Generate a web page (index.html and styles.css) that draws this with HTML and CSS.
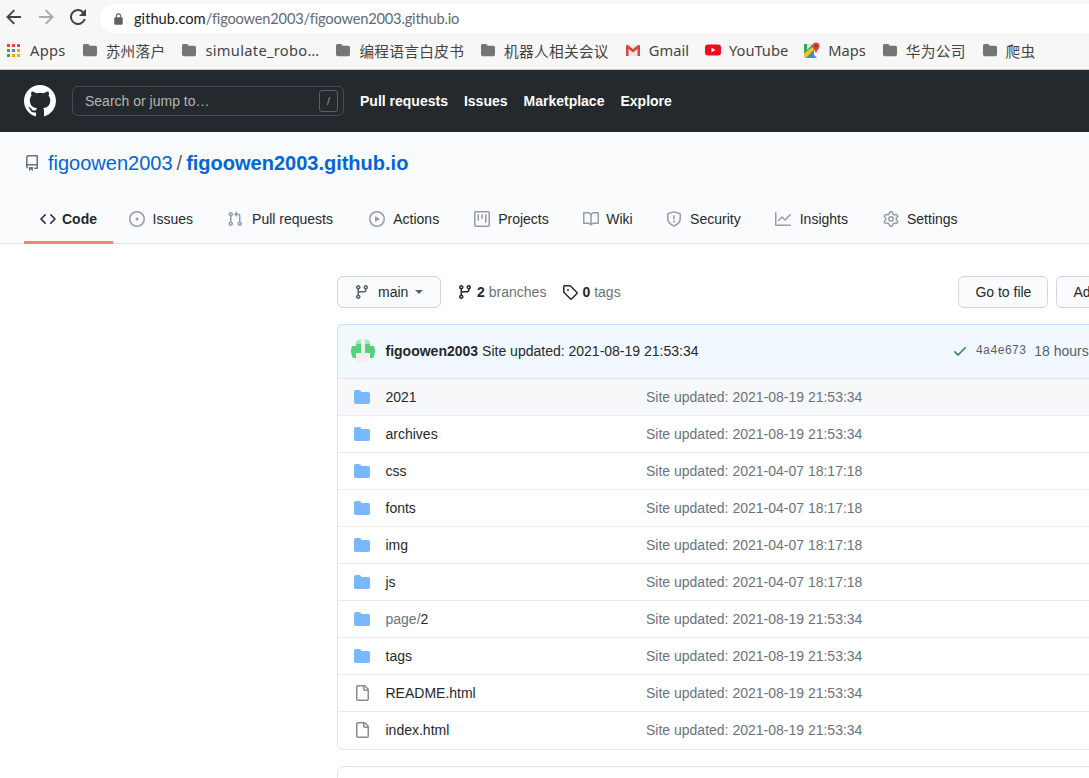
FILE: index.html
```html
<!DOCTYPE html>
<html>
<head>
  <title>figoowen2003/figoowen2003.github.io</title>
  <link rel="stylesheet" href="styles.css">
</head>
<body>
  <svg class="defs" width="0" height="0">
    <symbol id="i-repo" viewBox="0 0 16 16"><path d="M2 2.5A2.5 2.5 0 014.5 0h8.75a.75.75 0 01.75.75v12.5a.75.75 0 01-.75.75h-2.5a.75.75 0 110-1.5h1.75v-2h-8a1 1 0 00-.714 1.7.75.75 0 01-1.072 1.05A2.495 2.495 0 012 11.5v-9zm10.5-1V9h-8c-.356 0-.694.074-1 .208V2.5a1 1 0 011-1h8zM5 12.25v3.25a.25.25 0 00.4.2l1.45-1.087a.25.25 0 01.3 0L8.6 15.7a.25.25 0 00.4-.2v-3.25a.25.25 0 00-.25-.25h-3.5a.25.25 0 00-.25.25z"/></symbol>
    <symbol id="i-branch" viewBox="0 0 16 16"><path d="M11.75 2.5a.75.75 0 100 1.5.75.75 0 000-1.5zm-2.25.75a2.25 2.25 0 113 2.122V6A2.5 2.5 0 0110 8.5H6a1 1 0 00-1 1v1.128a2.251 2.251 0 11-1.5 0V5.372a2.25 2.25 0 111.5 0v1.836A2.492 2.492 0 016 7h4a1 1 0 001-1v-.628A2.25 2.25 0 019.5 3.25zM4.25 12a.75.75 0 100 1.5.75.75 0 000-1.5zM3.5 3.25a.75.75 0 111.5 0 .75.75 0 01-1.5 0z"/></symbol>
    <symbol id="i-dir" viewBox="0 0 16 16"><path d="M1.75 1A1.75 1.75 0 000 2.75v10.5C0 14.216.784 15 1.75 15h12.5A1.75 1.75 0 0016 13.25v-8.5A1.75 1.75 0 0014.25 3h-6.5a.25.25 0 01-.2-.1l-.9-1.2c-.33-.44-.85-.7-1.4-.7h-3.5z"/></symbol>
    <symbol id="i-file" viewBox="0 0 16 16"><path d="M3.75 1.5a.25.25 0 00-.25.25v12.5c0 .138.112.25.25.25h9.5a.25.25 0 00.25-.25V6h-2.75A1.75 1.75 0 019 4.25V1.5H3.75zm6.75.062V4.25c0 .138.112.25.25.25h2.688a.252.252 0 00-.011-.013l-2.914-2.914a.272.272 0 00-.013-.011zM2 1.75C2 .784 2.784 0 3.75 0h6.586c.464 0 .909.184 1.237.513l2.914 2.914c.329.328.513.773.513 1.237v9.586A1.75 1.75 0 0113.25 16h-9.5A1.75 1.75 0 012 14.25V1.75z"/></symbol>
  </svg>

  <div class="toolbar">
    <svg class="nav-btn" viewBox="0 0 16 16"><path d="M15 7H3.800l5.200-5.200L7.600.5 0.100 8l7.500 7.500 1.400-1.300L3.800 9H15z"/></svg>
    <svg class="nav-btn nav-off" viewBox="0 0 16 16"><path d="M1 7h11.200L7 1.800 8.400.5 15.900 8l-7.500 7.500-1.400-1.300L12.200 9H1z"/></svg>
    <svg class="nav-btn" viewBox="0 0 16 16"><path d="M13.650 2.350A8 8 0 1015.740 10h-2.080A6 6 0 118 2a5.900 5.900 0 014.220 1.780L9 7h7V0z"/></svg>
    <div class="omnibox">
      <svg class="lock" viewBox="0 0 10 13"><path d="M8.500 4.500H8V3.200a3 3 0 00-6 0v1.300h-.5A1.200 1.200 0 00.3 5.700v5.900a1.200 1.200 0 001.200 1.200h7a1.200 1.200 0 001.200-1.200V5.700a1.200 1.200 0 00-1.200-1.200zM3.200 3.200a1.800 1.800 0 013.600 0v1.300H3.200z"/></svg>
      <span class="url-host">github.com</span><span class="url-path">/figoowen2003/figoowen2003.github.io</span>
    </div>
  </div>

  <div class="bookmarks">
    <div class="bm bm-apps">
      <div class="apps-grid">
        <i class="c-r"></i><i class="c-r"></i><i class="c-r"></i>
        <i class="c-g"></i><i class="c-b"></i><i class="c-y"></i>
        <i class="c-g"></i><i class="c-y"></i><i class="c-y"></i>
      </div>
      <span>Apps</span>
    </div>
    <div class="bm"><svg class="bm-folder" viewBox="0 0 16 16"><use href="#i-dir"/></svg><span>苏州落户</span></div>
    <div class="bm"><svg class="bm-folder" viewBox="0 0 16 16"><use href="#i-dir"/></svg><span>simulate_robo…</span></div>
    <div class="bm"><svg class="bm-folder" viewBox="0 0 16 16"><use href="#i-dir"/></svg><span>编程语言白皮书</span></div>
    <div class="bm"><svg class="bm-folder" viewBox="0 0 16 16"><use href="#i-dir"/></svg><span>机器人相关会议</span></div>
    <div class="bm bm-site">
      <svg class="bm-icon" viewBox="0 0 16 16">
        <path fill="#e8e8e8" d="M1 3h14v11H1z"/>
        <path fill="#d9453a" d="M1 3.500v10.500h2.500V7l4.500 3.500L12.500 7v7H15V3.500l-1.500-.8L8 7 2.500 2.700z"/>
      </svg>
      <span>Gmail</span>
    </div>
    <div class="bm bm-site">
      <svg class="bm-icon" viewBox="0 0 16 16">
        <rect x="0" y="2.500" width="16" height="11" rx="3" fill="#f40b1f"/>
        <path fill="#fff" d="M6.500 5.700v4.600L10.500 8z"/>
      </svg>
      <span>YouTube</span>
    </div>
    <div class="bm bm-site">
      <svg class="bm-icon" viewBox="0 0 16 16">
        <path fill="#34a853" d="M0 2h10v14H0z"/>
        <path fill="#fbc02d" d="M0 11.500L8.500 5l2 2L2 16H0z"/>
        <path fill="#4285f4" d="M3 16l5-5 5 5z"/>
        <path fill="#dfe3e6" d="M3 2h6L3 8z"/>
        <circle cx="12" cy="4" r="3.500" fill="#db4437"/>
        <path fill="#db4437" d="M9.300 6l2.700 5 2.700-5z"/>
        <circle cx="12" cy="4" r="1.200" fill="#8e2a20"/>
      </svg>
      <span>Maps</span>
    </div>
    <div class="bm"><svg class="bm-folder" viewBox="0 0 16 16"><use href="#i-dir"/></svg><span>华为公司</span></div>
    <div class="bm"><svg class="bm-folder" viewBox="0 0 16 16"><use href="#i-dir"/></svg><span>爬虫</span></div>
  </div>

  <header class="site-header">
    <svg class="logo" viewBox="0 0 16 16"><path d="M8 0C3.580 0 0 3.580 0 8c0 3.540 2.290 6.530 5.470 7.590.4.070.55-.17.55-.38 0-.19-.01-.82-.01-1.490-2.010.37-2.530-.49-2.690-.94-.09-.23-.48-.94-.82-1.130-.28-.15-.68-.52-.01-.53.63-.01 1.080.58 1.230.82.72 1.210 1.870.87 2.330.66.070-.52.280-.87.510-1.070-1.780-.2-3.640-.89-3.640-3.950 0-.87.310-1.590.820-2.150-.08-.2-.36-1.020.08-2.120 0 0 .67-.21 2.200.82.640-.18 1.320-.27 2-.27.68 0 1.360.09 2 .27 1.530-1.040 2.200-.82 2.200-.82.44 1.100.16 1.920.08 2.120.51.56.82 1.270.82 2.150 0 3.070-1.870 3.750-3.650 3.950.29.25.54.73.54 1.480 0 1.070-.01 1.930-.01 2.200 0 .21.15.46.55.38A8.013 8.013 0 0016 8c0-4.420-3.580-8-8-8z"/></svg>
    <div class="search">
      <span>Search or jump to…</span>
      <kbd class="slash">/</kbd>
    </div>
    <nav class="top-nav">
      <a>Pull requests</a>
      <a>Issues</a>
      <a>Marketplace</a>
      <a>Explore</a>
    </nav>
  </header>

  <div class="repo-head">
    <h1 class="repo-title">
      <svg class="repo-icon" viewBox="0 0 16 16"><use href="#i-repo"/></svg>
      <a class="owner">figoowen2003</a>
      <span class="sep">/</span>
      <a class="repo-name">figoowen2003.github.io</a>
    </h1>
    <nav class="tabs">
      <a class="tab tab-on">
        <svg viewBox="0 0 16 16"><path d="M4.720 3.220a.75.75 0 011.060 1.060L2.060 8l3.720 3.720a.75.75 0 11-1.060 1.060L.47 8.530a.75.75 0 010-1.060l4.250-4.250zm6.560 0a.75.75 0 10-1.060 1.060L13.940 8l-3.720 3.720a.75.75 0 101.060 1.060l4.250-4.250a.75.75 0 000-1.060l-4.250-4.250z"/></svg>
        <span class="tab-label" data-bold="Code">Code</span>
      </a>
      <a class="tab">
        <svg viewBox="0 0 16 16"><path d="M8 9.500a1.500 1.500 0 100-3 1.500 1.500 0 000 3z"/><path d="M8 0a8 8 0 100 16A8 8 0 008 0zM1.500 8a6.500 6.500 0 1113 0 6.500 6.500 0 01-13 0z"/></svg>
        <span class="tab-label" data-bold="Issues">Issues</span>
      </a>
      <a class="tab">
        <svg viewBox="0 0 16 16"><path d="M7.177 3.073L9.573.677A.25.25 0 0110 .854v4.792a.25.25 0 01-.427.177L7.177 3.427a.25.25 0 010-.354zM3.750 2.500a.75.75 0 100 1.500.75.75 0 000-1.500zm-2.250.75a2.250 2.250 0 113 2.122v5.256a2.251 2.251 0 11-1.500 0V5.372A2.250 2.250 0 011.500 3.250zM11 2.500h-1V4h1a1 1 0 011 1v5.628a2.251 2.251 0 101.500 0V5A2.500 2.500 0 0011 2.500zm1 10.250a.75.75 0 111.500 0 .75.75 0 01-1.500 0zM3.750 12a.75.75 0 100 1.500.75.75 0 000-1.500z"/></svg>
        <span class="tab-label" data-bold="Pull requests">Pull requests</span>
      </a>
      <a class="tab">
        <svg viewBox="0 0 16 16"><path d="M1.500 8a6.500 6.500 0 1113 0 6.500 6.500 0 01-13 0zM8 0a8 8 0 100 16A8 8 0 008 0zM6.379 5.227A.25.25 0 006 5.442v5.117a.25.25 0 00.379.214l4.264-2.559a.25.25 0 000-.428L6.379 5.227z"/></svg>
        <span class="tab-label" data-bold="Actions">Actions</span>
      </a>
      <a class="tab">
        <svg viewBox="0 0 16 16"><path d="M1.750 0A1.750 1.750 0 000 1.750v12.500C0 15.216.784 16 1.750 16h12.500A1.750 1.750 0 0016 14.250V1.750A1.750 1.750 0 0014.250 0H1.750zM1.500 1.750a.25.25 0 01.25-.25h12.500a.25.25 0 01.25.25v12.500a.25.25 0 01-.25.25H1.750a.25.25 0 01-.25-.25V1.750zM11.750 3a.75.75 0 00-.75.75v7.500a.75.75 0 001.500 0v-7.500a.75.75 0 00-.75-.75zm-8.250.75a.75.75 0 011.500 0v5.500a.75.75 0 01-1.500 0v-5.500zM8 3a.75.75 0 00-.75.75v3.500a.75.75 0 001.500 0v-3.500A.75.75 0 008 3z"/></svg>
        <span class="tab-label" data-bold="Projects">Projects</span>
      </a>
      <a class="tab">
        <svg viewBox="0 0 16 16"><path d="M0 1.750A.75.75 0 01.75 1h4.253c1.227 0 2.317.59 3 1.501A3.744 3.744 0 0111.006 1h4.245a.75.75 0 01.75.75v10.500a.75.75 0 01-.75.75h-4.507a2.250 2.250 0 00-1.591.659l-.622.621a.75.75 0 01-1.060 0l-.622-.621A2.250 2.250 0 005.258 13H.75a.75.75 0 01-.75-.75V1.750zm8.755 3a2.250 2.250 0 012.250-2.250H14.500v9h-3.757c-.71 0-1.400.201-1.992.572l.004-7.322zm-1.504 7.324l.004-5.073-.002-2.253A2.250 2.250 0 005.003 2.500H1.500v9h3.757a3.750 3.750 0 011.994.574z"/></svg>
        <span class="tab-label" data-bold="Wiki">Wiki</span>
      </a>
      <a class="tab">
        <svg viewBox="0 0 16 16"><path d="M7.467.133a1.750 1.750 0 011.066 0l5.250 1.680A1.750 1.750 0 0115 3.480V7c0 1.566-.32 3.182-1.303 4.682-.983 1.498-2.585 2.813-5.032 3.855a1.700 1.700 0 01-1.330 0c-2.447-1.042-4.049-2.357-5.032-3.855C1.320 10.182 1 8.566 1 7V3.480a1.750 1.750 0 011.217-1.667l5.250-1.680zm.61 1.429a.25.25 0 00-.153 0l-5.250 1.680a.25.25 0 00-.174.238V7c0 1.358.275 2.666 1.057 3.860.784 1.194 2.121 2.340 4.366 3.297a.2.2 0 00.154 0c2.245-.956 3.582-2.104 4.366-3.298C13.225 9.666 13.500 8.360 13.500 7V3.480a.25.25 0 00-.174-.237l-5.250-1.680zM9 10.500a1 1 0 11-2 0 1 1 0 012 0zm-.25-5.750a.75.75 0 10-1.500 0v3a.75.75 0 001.500 0v-3z"/></svg>
        <span class="tab-label" data-bold="Security">Security</span>
      </a>
      <a class="tab">
        <svg viewBox="0 0 16 16"><path d="M1.500 1.750a.75.75 0 00-1.500 0v12.500c0 .414.336.75.75.75h14.500a.75.75 0 000-1.500H1.500V1.750zm14.280 2.530a.75.75 0 00-1.060-1.060L10 7.940 7.530 5.470a.75.75 0 00-1.060 0L3.220 8.720a.75.75 0 001.060 1.060L7 7.060l2.470 2.470a.75.75 0 001.060 0l5.250-5.250z"/></svg>
        <span class="tab-label" data-bold="Insights">Insights</span>
      </a>
      <a class="tab">
        <svg viewBox="0 0 16 16"><path d="M7.429 1.525a6.593 6.593 0 011.142 0c.036.003.108.036.137.146l.289 1.105c.147.56.55.967.997 1.189.174.086.341.183.501.29.417.278.97.423 1.530.27l1.102-.303c.11-.03.175.016.195.046.219.31.41.641.573.989.014.031.022.11-.059.19l-.815.806c-.411.406-.562.957-.53 1.456a4.588 4.588 0 010 .582c-.032.499.119 1.050.53 1.456l.815.806c.08.08.073.159.059.19a6.494 6.494 0 01-.573.99c-.02.029-.086.074-.195.045l-1.103-.303c-.559-.153-1.112-.008-1.529.27-.16.107-.327.204-.5.29-.449.222-.851.628-.998 1.189l-.289 1.105c-.029.11-.101.143-.137.146a6.613 6.613 0 01-1.142 0c-.036-.003-.108-.037-.137-.146l-.289-1.105c-.147-.56-.55-.967-.997-1.189a4.502 4.502 0 01-.501-.29c-.417-.278-.97-.423-1.530-.27l-1.102.303c-.11.03-.175-.016-.195-.046a6.492 6.492 0 01-.573-.989c-.014-.031-.022-.11.059-.19l.815-.806c.411-.406.562-.957.53-1.456a4.587 4.587 0 010-.582c.032-.499-.119-1.050-.53-1.456l-.815-.806c-.08-.08-.073-.159-.059-.19a6.440 6.440 0 01.573-.99c.02-.029.086-.075.195-.045l1.103.303c.559.153 1.112.008 1.529-.27.16-.107.327-.204.5-.29.449-.222.851-.628.998-1.189l.289-1.105c.029-.11.101-.143.137-.146zM8 0c-.236 0-.47.01-.701.03-.743.065-1.290.615-1.458 1.261l-.29 1.106c-.017.066-.078.158-.211.224a5.994 5.994 0 00-.668.386c-.123.082-.233.09-.3.071L3.270 2.776c-.644-.177-1.392.02-1.820.63a7.977 7.977 0 00-.704 1.217c-.315.675-.111 1.422.363 1.891l.815.806c.05.048.098.147.088.294a6.084 6.084 0 000 .772c.01.147-.038.246-.088.294l-.815.806c-.474.469-.678 1.216-.363 1.891.2.428.436.835.704 1.218.428.609 1.176.806 1.820.63l1.103-.303c.066-.019.176-.011.299.071.213.143.436.272.668.386.133.066.194.158.212.224l.289 1.106c.169.646.715 1.196 1.458 1.260a8.094 8.094 0 001.402 0c.743-.064 1.290-.614 1.458-1.260l.29-1.106c.017-.066.078-.158.211-.224a5.980 5.980 0 00.668-.386c.123-.082.233-.09.3-.071l1.102.302c.644.177 1.392-.02 1.820-.63.268-.382.505-.789.704-1.217.315-.675.111-1.422-.364-1.891l-.814-.806c-.05-.048-.098-.147-.088-.294a6.100 6.100 0 000-.772c-.01-.147.039-.246.088-.294l.814-.806c.475-.469.679-1.216.364-1.891a7.992 7.992 0 00-.704-1.218c-.428-.609-1.176-.806-1.820-.63l-1.103.303c-.066.019-.176.011-.299-.071a5.991 5.991 0 00-.668-.386c-.133-.066-.194-.158-.212-.224L10.160 1.290C9.990.645 9.444.095 8.701.031A8.094 8.094 0 008 0zm1.500 8a1.500 1.500 0 11-3 0 1.500 1.500 0 013 0zM11 8a3 3 0 11-6 0 3 3 0 016 0z"/></svg>
        <span class="tab-label" data-bold="Settings">Settings</span>
      </a>
    </nav>
  </div>

  <main class="repo-main">
    <div class="file-nav">
      <button class="btn btn-branch">
        <svg class="branch-icon" viewBox="0 0 16 16"><use href="#i-branch"/></svg>
        <span>main</span>
        <i class="caret"></i>
      </button>
      <a class="nav-count"><svg viewBox="0 0 16 16"><use href="#i-branch"/></svg><b>2</b><span>branches</span></a>
      <a class="nav-count"><svg viewBox="0 0 16 16"><path d="M2.500 7.775V2.750a.25.25 0 01.25-.25h5.025a.25.25 0 01.177.073l6.250 6.250a.25.25 0 010 .354l-5.025 5.025a.25.25 0 01-.354 0l-6.250-6.250a.25.25 0 01-.073-.177zm-1.500 0V2.750C1 1.784 1.784 1 2.750 1h5.025c.464 0 .91.184 1.238.513l6.250 6.250a1.750 1.750 0 010 2.474l-5.026 5.026a1.750 1.750 0 01-2.474 0l-6.250-6.250A1.750 1.750 0 011 7.775zM6 5a1 1 0 100 2 1 1 0 000-2z"/></svg><b>0</b><span>tags</span></a>
      <div class="file-actions">
        <button class="btn">Go to file</button>
        <button class="btn">Add file <i class="caret"></i></button>
      </div>
    </div>

    <div class="box">
      <div class="commit-head">
        <svg class="avatar" viewBox="0 0 5 5" shape-rendering="crispEdges">
          <rect width="5" height="5" fill="#f0f0f0"/>
          <path fill="#a9e6bb" d="M1 0h1v1H1zM3 0h1v1H3z"/>
          <path fill="#55d17b" d="M1 1h1v2H1zM3 1h1v2H3zM0 1.500h1v2.500H0zM4 1.500h1v2.500H4z"/>
        </svg>
        <b class="commit-author">figoowen2003</b>
        <span class="commit-msg">Site updated: 2021-08-19 21:53:34</span>
        <div class="commit-meta">
          <svg class="check" viewBox="0 0 16 16"><path d="M13.780 4.220a.75.75 0 010 1.060l-7.250 7.250a.75.75 0 01-1.060 0L2.220 9.280a.75.75 0 011.060-1.060L6 10.940l6.720-6.720a.75.75 0 011.060 0z"/></svg>
          <code class="sha">4a4e673</code>
          <span>18 hours ago</span>
        </div>
      </div>
      <div class="row row-hover">
        <svg class="dir" viewBox="0 0 16 16"><use href="#i-dir"/></svg><a class="name">2021</a><span class="msg">Site updated: 2021-08-19 21:53:34</span>
      </div>
      <div class="row">
        <svg class="dir" viewBox="0 0 16 16"><use href="#i-dir"/></svg><a class="name">archives</a><span class="msg">Site updated: 2021-08-19 21:53:34</span>
      </div>
      <div class="row">
        <svg class="dir" viewBox="0 0 16 16"><use href="#i-dir"/></svg><a class="name">css</a><span class="msg">Site updated: 2021-04-07 18:17:18</span>
      </div>
      <div class="row">
        <svg class="dir" viewBox="0 0 16 16"><use href="#i-dir"/></svg><a class="name">fonts</a><span class="msg">Site updated: 2021-04-07 18:17:18</span>
      </div>
      <div class="row">
        <svg class="dir" viewBox="0 0 16 16"><use href="#i-dir"/></svg><a class="name">img</a><span class="msg">Site updated: 2021-04-07 18:17:18</span>
      </div>
      <div class="row">
        <svg class="dir" viewBox="0 0 16 16"><use href="#i-dir"/></svg><a class="name">js</a><span class="msg">Site updated: 2021-04-07 18:17:18</span>
      </div>
      <div class="row">
        <svg class="dir" viewBox="0 0 16 16"><use href="#i-dir"/></svg><a class="name"><span class="name-dim">page/</span>2</a><span class="msg">Site updated: 2021-08-19 21:53:34</span>
      </div>
      <div class="row">
        <svg class="dir" viewBox="0 0 16 16"><use href="#i-dir"/></svg><a class="name">tags</a><span class="msg">Site updated: 2021-08-19 21:53:34</span>
      </div>
      <div class="row">
        <svg class="doc" viewBox="0 0 16 16"><use href="#i-file"/></svg><a class="name">README.html</a><span class="msg">Site updated: 2021-08-19 21:53:34</span>
      </div>
      <div class="row">
        <svg class="doc" viewBox="0 0 16 16"><use href="#i-file"/></svg><a class="name">index.html</a><span class="msg">Site updated: 2021-08-19 21:53:34</span>
      </div>
    </div>

    <div class="box box-next"></div>
  </main>
</body>
</html>
```

FILE: styles.css
```css
html, body {
  margin: 0;
  height: 778px;
  overflow: hidden;
}

body {
  font-family: "Liberation Sans", Arial, sans-serif;
  font-size: 14px;
  color: #24292e;
  background: #fff;
}

svg {
  fill-rule: evenodd;
}

.defs {
  display: block;
  height: 0;
}

/* browser chrome */
.toolbar {
  height: 33px;
  display: flex;
  align-items: center;
  padding-left: 6px;
  background: #f7f7f7;
  box-sizing: border-box;
  padding-top: 4px;
}

.nav-btn {
  width: 16px;
  height: 16px;
  margin-right: 16px;
  fill: #444;
  margin-top: -4px;
}

.nav-off {
  fill: #aaa;
}

.omnibox {
  flex: 1;
  height: 29px;
  margin-left: -2px;
  padding-left: 14px;
  display: flex;
  align-items: center;
  background: #fff;
  border-radius: 14px 0 0 14px;
  font-family: "Lato", sans-serif;
  font-size: 14.67px;
}

.lock {
  width: 9px;
  height: 12px;
  margin-right: 11px;
  fill: #5f6368;
}

.url-host {
  color: #1a1a1a;
}

.url-path {
  color: #5f6a75;
  letter-spacing: -0.2px;
}

.bookmarks {
  height: 37px;
  display: flex;
  align-items: center;
  gap: 16px;
  padding-left: 7px;
  padding-bottom: 2px;
  background: #f7f7f7;
  border-bottom: 1px solid #c9c9c9;
  box-sizing: border-box;
  font-family: "Noto Sans", "Noto Sans CJK SC", sans-serif;
  font-size: 14.67px;
  letter-spacing: 0.3px;
  color: #444;
  white-space: nowrap;
}

.bm {
  display: flex;
  align-items: center;
  gap: 8px;
}

.bm-apps {
  gap: 10px;
}

.bm-site {
  letter-spacing: 0;
}

.apps-grid {
  width: 13px;
  height: 13px;
  display: grid;
  grid-template-columns: repeat(3, 3px);
  grid-template-rows: repeat(3, 3px);
  gap: 2px;
}

.c-r { background: #e8453c; }
.c-g { background: #34a853; }
.c-b { background: #4285f4; }
.c-y { background: #f9ab00; }

.bm-folder {
  width: 14px;
  height: 14px;
  margin: 0 1px;
  fill: #757575;
}

.bm-icon {
  width: 16px;
  height: 16px;
}

/* github header */
.site-header {
  height: 62px;
  display: flex;
  align-items: center;
  padding: 0 24px;
  background: #24292e;
}

.logo {
  width: 32px;
  height: 32px;
  margin-right: 16px;
  fill: #fff;
}

.search {
  width: 272px;
  height: 30px;
  box-sizing: border-box;
  display: flex;
  align-items: center;
  justify-content: space-between;
  padding: 0 5px 0 12px;
  border: 1px solid #444d56;
  border-radius: 6px;
  color: #b3b5b7;
}

.slash {
  width: 17px;
  height: 20px;
  border: 1px solid #57606a;
  border-radius: 3px;
  font: 11px "Liberation Sans", sans-serif;
  color: #959da5;
  display: flex;
  align-items: center;
  justify-content: center;
}

.top-nav {
  display: flex;
  gap: 16px;
  margin-left: 16px;
  font-weight: bold;
  color: #fff;
}

/* repo head */
.repo-head {
  height: 112px;
  box-sizing: border-box;
  padding-top: 16px;
  background: #fafbfc;
  border-bottom: 1px solid #e1e4e8;
}

.repo-title {
  height: 30px;
  margin: 0;
  padding-left: 24px;
  display: flex;
  align-items: center;
  font-size: 20px;
  line-height: 30px;
  font-weight: normal;
  color: #0366d6;
}

.repo-icon {
  width: 16px;
  height: 16px;
  margin-right: 8px;
  fill: #6a737d;
}

.sep {
  margin: 0 4px;
  color: #586069;
}

.repo-name {
  font-weight: bold;
}

.tabs {
  display: flex;
  margin-top: 22px;
  padding-left: 24px;
}

.tab {
  display: flex;
  align-items: center;
  gap: 6px;
  padding: 0 16px 3px;
  height: 44px;
  box-sizing: border-box;
  color: #24292e;
  border-bottom: 3px solid transparent;
}

.tab svg {
  width: 16px;
  height: 16px;
  fill: #959da5;
}

.tab-label {
  text-align: center;
}

/* reserves the bold width, the same as the selected tab */
.tab-label::after {
  content: attr(data-bold);
  display: block;
  height: 0;
  overflow: hidden;
  visibility: hidden;
  font-weight: bold;
}

.tab-on {
  font-weight: bold;
  border-bottom-color: #f9826c;
}

.tab-on svg {
  fill: #24292e;
}

/* file list */
.repo-main {
  padding: 32px 0 0 337px;
}

.file-nav {
  width: 819px;
  display: flex;
  align-items: center;
}

.btn {
  height: 32px;
  padding: 0 16px;
  background: #fafbfc;
  border: 1px solid #d1d5da;
  border-radius: 6px;
  font: 14px "Liberation Sans", sans-serif;
  color: #24292e;
  white-space: nowrap;
}

.btn-branch {
  width: 104px;
  display: flex;
  align-items: center;
  padding: 0 0 0 16px;
}

.branch-icon {
  width: 16px;
  height: 16px;
  margin-right: 8px;
  fill: #586069;
}

.caret {
  display: inline-block;
  margin-left: 7px;
  vertical-align: middle;
  border-top: 4px solid #586069;
  border-left: 4px solid transparent;
  border-right: 4px solid transparent;
}

.nav-count {
  display: flex;
  align-items: center;
  margin-left: 16px;
  color: #6a737d;
}

.nav-count svg {
  width: 16px;
  height: 16px;
  margin-right: 4px;
  fill: #24292e;
}

.nav-count b {
  margin-right: 4px;
  color: #24292e;
}

.file-actions {
  margin-left: auto;
  display: flex;
  gap: 8px;
}

.box {
  width: 819px;
  box-sizing: border-box;
  margin-top: 16px;
  border: 1px solid #e1e4e8;
  border-radius: 6px;
}

.commit-head {
  height: 55px;
  margin: -1px -1px 0;
  box-sizing: border-box;
  display: flex;
  align-items: center;
  padding: 0 39px 1px 13px;
  background: #f1f8ff;
  border: 1px solid #c8e1ff;
  border-bottom-color: #e1e4e8;
  border-radius: 6px 6px 0 0;
}

.avatar {
  width: 24px;
  height: 24px;
  margin-right: 10.5px;
  border-radius: 50%;
}

.commit-author {
  margin-right: 4px;
}

.commit-msg {
  color: #24292e;
}

.commit-meta {
  margin-left: auto;
  display: flex;
  align-items: center;
  color: #586069;
}

.check {
  width: 16px;
  height: 16px;
  margin-right: 8px;
  fill: #22863a;
}

.sha {
  margin-right: 8px;
  font: 12px "Liberation Mono", monospace;
  color: #586069;
}

.row {
  height: 37px;
  box-sizing: border-box;
  display: flex;
  align-items: center;
  padding-left: 16px;
  border-top: 1px solid #eaecef;
}

.commit-head + .row {
  height: 36px;
  border-top: 0;
}

.row:last-child {
  height: 38px;
  padding-bottom: 1px;
}

.row-hover {
  background: #f6f8fa;
}

.row svg {
  width: 16px;
  height: 16px;
  flex: none;
  margin-right: 15.5px;
}

.dir {
  fill: #79b8ff;
}

.doc {
  fill: #848d97;
}

.name {
  width: 260.5px;
  flex: none;
  color: #24292e;
}

.name-dim {
  color: #6a737d;
}

.msg {
  color: #6a737d;
}

.box-next {
  height: 40px;
}
```
